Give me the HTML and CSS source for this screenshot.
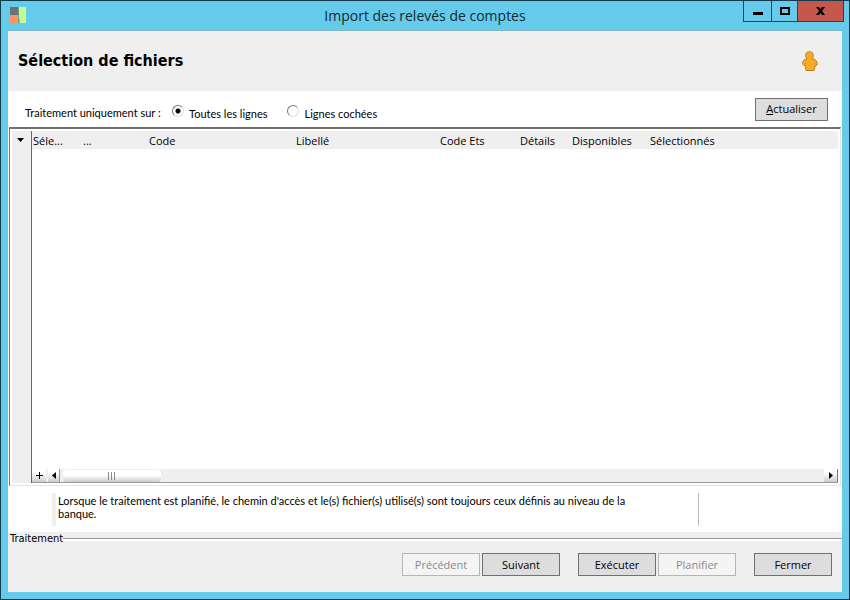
FILE: index.html
```html
<!DOCTYPE html>
<html lang="fr">
<head>
<meta charset="utf-8">
<title>Import des relevés de comptes</title>
<link rel="stylesheet" href="styles.css">
</head>
<body>
<div class="window">
  <header class="titlebar">
    <svg class="app-icon" width="16" height="16" viewBox="0 0 16 16" aria-hidden="true">
      <rect width="8" height="8" fill="#6d7375"/>
      <rect y="8" width="8" height="8" fill="#fa9462"/>
      <path d="M8 0h1v16H8z" fill="#719a91"/>
      <path d="M9 0h7v16h-6V12H9z" fill="#c3fc93"/>
    </svg>
    <h1 class="window-title">Import des relevés de comptes</h1>
    <div class="window-controls">
      <button class="control control-min" aria-label="Réduire"><svg width="10" height="8" viewBox="0 0 10 8"><path d="M0 5h10v3H0z"/></svg></button>
      <button class="control control-max" aria-label="Agrandir"><svg width="10" height="8" viewBox="0 0 10 8"><path fill-rule="evenodd" d="M0 0h10v8H0zM2 2v4h6V2z"/></svg></button>
      <button class="control control-close" aria-label="Fermer la fenêtre"><svg width="9" height="8" viewBox="0 0 9 8"><path d="M0 0h3l1.500 2L6 0h3L6 4l3 4H6L4.500 6 3 8H0l3-4z"/></svg></button>
    </div>
  </header>

  <main class="content">
    <div class="banner">
      <h2 class="heading">Sélection de fichiers</h2>
      <svg width="16" height="20" viewBox="0 0 16 20" aria-hidden="true">
        <path d="M4.500 8Q2 8 1 10.500L.500 13 2 14.500l1.500.500.500 4.500h8l1-4.500 2-1 .500-1.500-1.500-3Q13 8 11 8z" fill="#fcab20" stroke="#b9812c"/>
        <circle cx="7.500" cy="4.500" r="4" fill="#fcab20" stroke="#c58a30"/>
        <path d="M5.500 8h4" stroke="#fcab20" stroke-width="2"/>
        <path d="M3.500 11.500v3M12.500 11.500v3" stroke="#d48f22" stroke-width=".7"/>
      </svg>
    </div>

    <div class="filter">
      <span class="filter-label" id="scope">Traitement uniquement sur :</span>
      <div class="choices" role="radiogroup" aria-labelledby="scope">
        <label class="choice"><input type="radio" name="scope" checked><span>Toutes les lignes</span></label>
        <label class="choice"><input type="radio" name="scope"><span>Lignes cochées</span></label>
      </div>
      <button class="button refresh"><u>A</u>ctualiser</button>
    </div>

    <section class="grid">
      <div class="gutter">
        <button class="gutter-menu" aria-label="Menu des lignes"><svg width="7" height="4" viewBox="0 0 7 4"><path d="M0 0h7L3.500 4z"/></svg></button>
      </div>
      <div class="grid-main">
        <div class="rows">
          <table class="files">
            <colgroup>
              <col class="c-select"><col class="c-dots"><col class="c-code"><col class="c-label"><col class="c-ets"><col class="c-details"><col class="c-available"><col>
            </colgroup>
            <thead>
              <tr><th>Séle...</th><th>...</th><th>Code</th><th>Libellé</th><th>Code Ets</th><th>Détails</th><th>Disponibles</th><th>Sélectionnés</th></tr>
            </thead>
          </table>
        </div>
        <div class="scrollbar">
          <button class="scroll-button add" aria-label="Ajouter"><svg width="7" height="7" viewBox="0 0 7 7"><path d="M3 0h1v3h3v1H4v3H3V4H0V3h3z"/></svg></button>
          <button class="scroll-button back" aria-label="Défiler à gauche"><svg width="4" height="7" viewBox="0 0 4 7"><path d="M4 0v7L0 3.500z"/></svg></button>
          <div class="track"><div class="thumb"><svg width="8" height="8" viewBox="0 0 8 8"><path d="M0 0h1v8H0zM3 0h1v8H3zM6 0h1v8H6z" fill="#888"/></svg></div></div>
          <button class="scroll-button next" aria-label="Défiler à droite"><svg width="4" height="7" viewBox="0 0 4 7"><path d="M0 0v7l4-3.500z"/></svg></button>
        </div>
      </div>
    </section>

    <div class="note">
      <p class="note-text">Lorsque le traitement est planifié, le chemin d'accès et le(s) fichier(s) utilisé(s) sont toujours ceux définis au niveau de la banque.</p>
    </div>

    <footer class="footer">
      <div class="legend">Traitement</div>
      <div class="actions">
        <div class="action-group"><button class="button" disabled>Précédent</button><button class="button">Suivant</button></div>
        <div class="action-group"><button class="button">Exécuter</button><button class="button" disabled>Planifier</button></div>
        <button class="button">Fermer</button>
      </div>
    </footer>
  </main>
</div>
</body>
</html>
```

FILE: styles.css
```css
* { box-sizing: border-box; }

body {
  margin: 0;
  font: 11px/16px "Open Sans", "Noto Sans", sans-serif;
  color: #000;
}

button { font: inherit; color: inherit; padding: 0; }
svg { display: block; }

.window {
  display: flex;
  flex-direction: column;
  min-height: 100vh;
  padding: 0 7px 7px;
  border: 1px solid #143b4d;
  background: #66caea;
}

.titlebar {
  display: grid;
  grid-template-columns: 102px 1fr 102px;
  height: 30px;
  border-bottom: 1px solid #7fb4c6;
}

.app-icon { margin: 6px 0 0 2px; }

.window-title {
  margin: 0;
  font: 14px/29px "Open Sans", sans-serif;
  text-align: center;
  color: #0c2b36;
}

.window-controls {
  display: flex;
  justify-self: end;
  height: 21px;
  margin-right: -2px;
  border: 1px solid #1d4553;
  border-top: 0;
}

.control {
  display: grid;
  place-items: center;
  width: 26px;
  border: 0;
  border-right: 1px solid #1d4553;
  background: transparent;
}

.control-min { width: 28px; }
.control-close { width: 45px; border-right: 0; background: #c4584c; }

.content {
  display: flex;
  flex: 1;
  flex-direction: column;
  background: #fff;
}

.banner {
  display: flex;
  align-items: center;
  justify-content: space-between;
  height: 60px;
  padding: 0 24px 0 10px;
  background: #efefef;
}

.heading { margin: 0; font: bold 16px/24px "DejaVu Sans Condensed", "DejaVu Sans", sans-serif; }

.filter {
  display: flex;
  align-items: center;
  height: 36px;
  padding: 0 14px 0 17px;
}

.filter-label, .choice, .note-text { font: 11px/13px Lato, "Liberation Sans", sans-serif; }
.filter-label { width: 147px; padding-top: 6px; }
.choices { display: flex; gap: 20px; padding-top: 8px; }
.choice { display: flex; gap: 5px; }

.choice input {
  width: 12px;
  height: 12px;
  margin: -2px 0 0;
  border: 1px solid;
  border-color: #777 #ddd #ddd #777;
  border-radius: 50%;
  appearance: none;
  background: #fff;
}

.choice input:checked { background: radial-gradient(circle, #000 2px, #fff 3px); }

.button {
  width: 78px;
  height: 23px;
  border: 1px solid #707070;
  background: #ddd;
}

.button:disabled { border-color: #b5b5b5; background: #f4f4f4; color: #8a8a8a; }
.refresh { width: 73px; margin-left: auto; }

.grid {
  display: flex;
  flex: 1;
  margin: 0 1px;
  padding: 2px;
  border: 1px solid #e3e3e3;
  border-top: 2px solid #71716c;
  border-left-color: #71716c;
}

.gutter { width: 20px; border-right: 1px solid #666; background: #efefef; }

.gutter-menu {
  display: grid;
  place-items: center;
  width: 17px;
  height: 18px;
  border: 0;
  background: transparent;
}

.grid-main { display: flex; flex: 1; flex-direction: column; min-width: 0; }
.rows { flex: 1; }

.files { width: 100%; table-layout: fixed; border-collapse: collapse; background: #efefef; }
.files th {
  height: 18px;
  padding: 1px 0 0 1px;
  font-weight: normal;
  line-height: 17px;
  text-align: left;
  white-space: nowrap;
}

.c-select { width: 50px; }
.c-dots { width: 66px; }
.c-code { width: 147px; }
.c-label { width: 144px; }
.c-ets { width: 80px; }
.c-details { width: 52px; }
.c-available { width: 78px; }

.scrollbar { display: flex; height: 14px; border-bottom: 1px solid #999; background: #efefef; }

.scroll-button {
  display: grid;
  place-items: center;
  width: 14px;
  border: 0;
  background: linear-gradient(#fff 30%, #ccc);
}

.back { width: 12px; margin-left: 2px; border-right: 1px solid #999; }
.next { border-right: 1px solid #777; }
.track { flex: 1; padding: 1px 3px; }

.thumb {
  display: grid;
  place-items: center;
  width: 98px;
  height: 12px;
  border-radius: 3px;
  background: linear-gradient(#fff 45%, #ccc);
}

.note { height: 46px; padding: 7px 143px 6px 44px; }

.note-text {
  height: 33px;
  margin: 0;
  padding: 1px 60px 0 2px;
  border-right: 1px solid #bbb;
  border-left: 4px solid #efefef;
}

.footer { height: 60px; padding-right: 10px; background: #efefef; }

.legend {
  display: flex;
  align-items: center;
  height: 14px;
  margin-right: -10px;
  padding-left: 2px;
  font: 11px/14px "DejaVu Sans Condensed", "DejaVu Sans", sans-serif;
}

.legend::after { flex: 1; height: 2px; border-top: 1px solid #999; background: #fff; content: ""; }

.actions { display: flex; justify-content: flex-end; gap: 18px; padding-top: 7px; }
.action-group { display: flex; gap: 2px; }
```
